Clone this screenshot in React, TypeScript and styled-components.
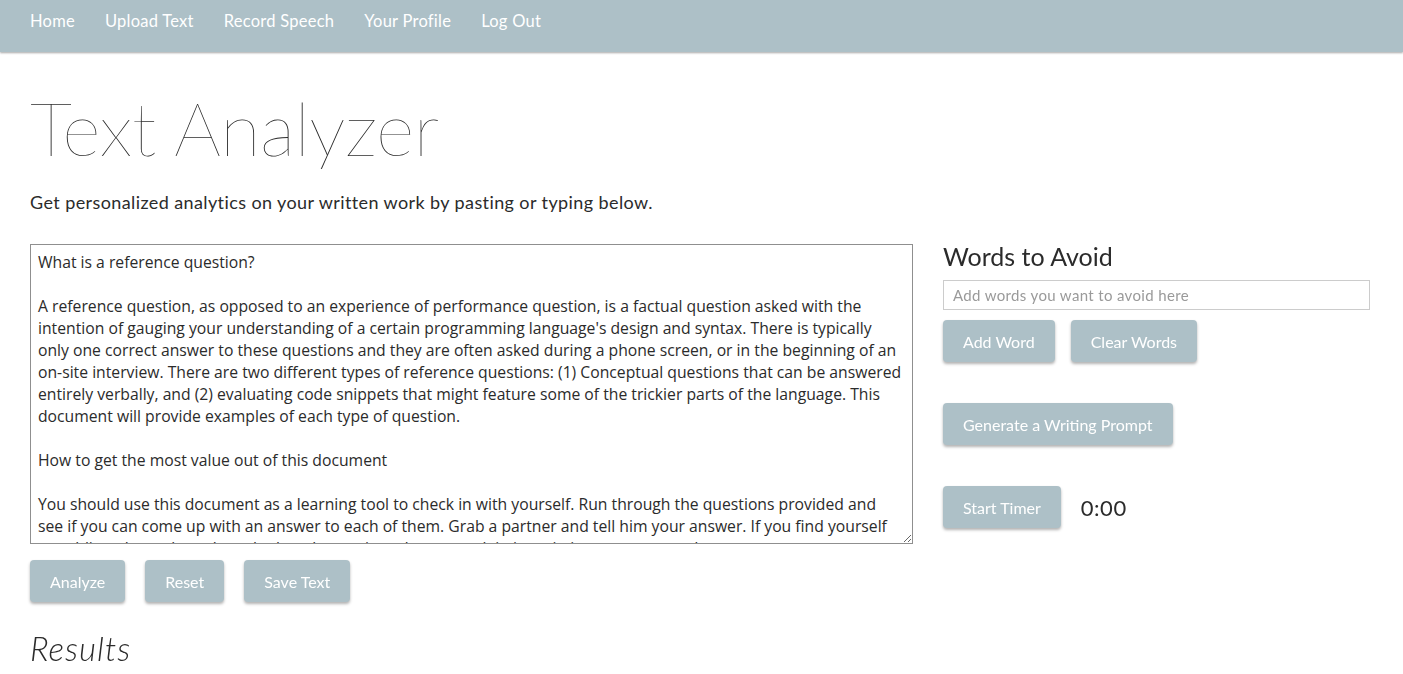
import React, { useState } from 'react';
import styled, { createGlobalStyle } from 'styled-components';

const colors = {
  slate: '#adc0c7',
  text: '#2b2b2b',
  muted: '#9a9a9a',
  line: '#cccccc',
  white: '#ffffff',
};

const font = `'Lato', 'Open Sans', sans-serif`;
const bodyFont = `'Open Sans', 'Lato', sans-serif`;

const GlobalStyle = createGlobalStyle`
  body {
    margin: 0;
    background: ${colors.white};
    font-family: ${font};
    color: ${colors.text};
  }
`;

const NavBar = styled.nav`
  height: 52px;
  background: ${colors.slate};
  box-shadow: 0 1px 2px rgba(0, 0, 0, 0.35);
  display: flex;
  align-items: flex-start;
  gap: 30px;
  padding: 0 30px;
`;

const NavLink = styled.a`
  color: ${colors.white};
  font-size: 16.5px;
  line-height: 43px;
  text-decoration: none;
  letter-spacing: 0.25px;
  cursor: pointer;
`;

const Page = styled.main`
  padding: 31px 33px 0 30px;
`;

const Title = styled.h1`
  margin: 0;
  font-size: 74px;
  font-weight: 100;
  line-height: 90px;
  letter-spacing: -0.5px;
`;

const Lead = styled.p`
  margin: 17px 0 30px;
  font-size: 18px;
  line-height: 24px;
  letter-spacing: 0.4px;
`;

const Columns = styled.div`
  display: grid;
  grid-template-columns: 883px 427px;
  column-gap: 30px;
  align-items: start;
`;

const TextBox = styled.textarea`
  display: block;
  box-sizing: border-box;
  width: 883px;
  height: 300px;
  margin: 0;
  padding: 6px 7px 7px;
  border: 1px solid #8f8f8f;
  font-family: ${bodyFont};
  font-size: 15.73px;
  line-height: 22px;
  color: ${colors.text};
  resize: both;
  scrollbar-width: none;
  &::-webkit-scrollbar {
    display: none;
  }
`;

const ButtonRow = styled.div<{ $top: number; $gap?: number }>`
  display: flex;
  align-items: center;
  gap: ${(p) => p.$gap ?? 16}px;
  margin-top: ${(p) => p.$top}px;
`;

const Button = styled.button`
  height: 42px;
  padding: 0 20px;
  border: none;
  border-radius: 4px;
  background: ${colors.slate};
  color: ${colors.white};
  font-family: ${font};
  font-size: 16px;
  box-shadow: 0 2px 3px rgba(0, 0, 0, 0.3);
  cursor: pointer;
`;

const SideHeading = styled.h2`
  margin: 0 0 12px;
  font-size: 25px;
  font-weight: 400;
  line-height: 24px;
`;

const WordInput = styled.input`
  display: block;
  box-sizing: border-box;
  width: 427px;
  height: 30px;
  padding: 0 9px;
  border: 1px solid ${colors.line};
  font-family: ${font};
  font-size: 15px;
  letter-spacing: 0.35px;
  color: ${colors.text};
  &::placeholder {
    color: ${colors.muted};
  }
`;

const Timer = styled.span`
  font-size: 22px;
  letter-spacing: 0.5px;
`;

const ResultsHeading = styled.h2`
  margin: 26px 0 0;
  font-size: 33px;
  font-weight: 300;
  font-style: italic;
  line-height: 40px;
  letter-spacing: 1px;
`;

const sample = `What is a reference question?

A reference question, as opposed to an experience of performance question, is a factual question asked with the intention of gauging your understanding of a certain programming language's design and syntax. There is typically only one correct answer to these questions and they are often asked during a phone screen, or in the beginning of an on-site interview. There are two different types of reference questions: (1) Conceptual questions that can be answered entirely verbally, and (2) evaluating code snippets that might feature some of the trickier parts of the language. This document will provide examples of each type of question.

How to get the most value out of this document

You should use this document as a learning tool to check in with yourself. Run through the questions provided and see if you can come up with an answer to each of them. Grab a partner and tell him your answer. If you find yourself stumbling, then take a closer look at that topic and try to explain it again in your own words.`;

const navItems = ['Home', 'Upload Text', 'Record Speech', 'Your Profile', 'Log Out'];

export default function App() {
  const [text, setText] = useState(sample);
  const [word, setWord] = useState('');

  return (
    <>
      <GlobalStyle />
      <NavBar>
        {navItems.map((item) => (
          <NavLink key={item}>{item}</NavLink>
        ))}
      </NavBar>
      <Page>
        <Title>Text Analyzer</Title>
        <Lead>Get personalized analytics on your written work by pasting or typing below.</Lead>
        <Columns>
          <div>
            <TextBox value={text} onChange={(e) => setText(e.target.value)} />
            <ButtonRow $top={16} $gap={20}>
              <Button>Analyze</Button>
              <Button>Reset</Button>
              <Button>Save Text</Button>
            </ButtonRow>
          </div>
          <div>
            <SideHeading>Words to Avoid</SideHeading>
            <WordInput
              placeholder="Add words you want to avoid here"
              value={word}
              onChange={(e) => setWord(e.target.value)}
            />
            <ButtonRow $top={10}>
              <Button>Add Word</Button>
              <Button>Clear Words</Button>
            </ButtonRow>
            <ButtonRow $top={41}>
              <Button>Generate a Writing Prompt</Button>
            </ButtonRow>
            <ButtonRow $top={41} $gap={20}>
              <Button>Start Timer</Button>
              <Timer>0:00</Timer>
            </ButtonRow>
          </div>
        </Columns>
        <ResultsHeading>Results</ResultsHeading>
      </Page>
    </>
  );
}
